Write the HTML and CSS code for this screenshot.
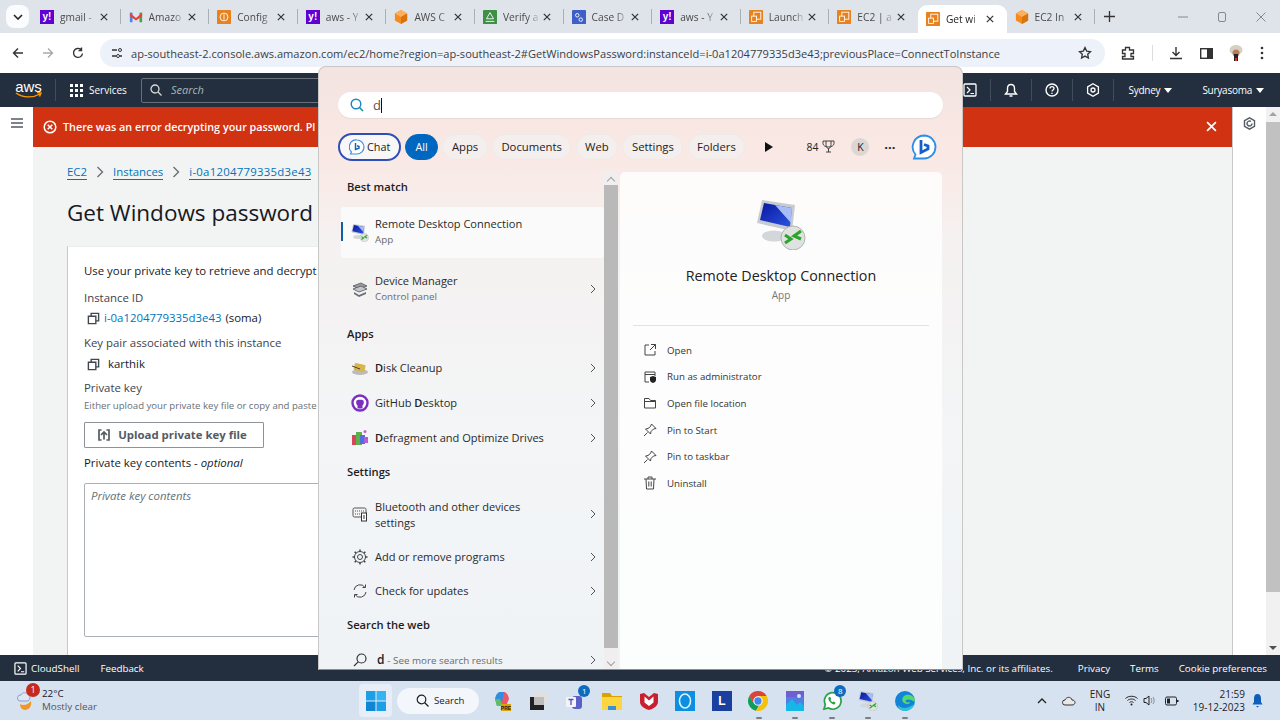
FILE: index.html
```html
<!DOCTYPE html>
<html lang="en">
<head>
<meta charset="utf-8">
<title>Get Windows password</title>
<link rel="stylesheet" href="styles.css">
</head>
<body>
<svg class="defs" width="0" height="0">
  <defs>
    <linearGradient id="scr" x1="0" y1="0" x2="1" y2="1"><stop offset="0" stop-color="#0a18a0"/><stop offset="1" stop-color="#2a55e0"/></linearGradient>
  </defs>
  <symbol id="cube" viewBox="0 0 16 16"><path fill="#f58a1f" d="M8 0l7 4v8l-7 4-7-4V4z"/><path fill="#fbb05c" d="M8 0l7 4-7 4-7-4z"/><path fill="#d9730d" d="M8 8l7-4v8l-7 4z"/></symbol>
  <symbol id="ec2" viewBox="0 0 16 16"><rect width="16" height="16" rx="1" fill="#e8821e"/><rect x="5.5" y="2.5" width="8" height="8" fill="none" stroke="#fff" stroke-width="1"/><rect x="3" y="7" width="5.5" height="6" fill="#e8821e" stroke="#fff" stroke-width="1"/></symbol>
  <symbol id="x" viewBox="0 0 10 10"><path d="M1 1l8 8M9 1l-8 8" stroke="currentColor" stroke-width="1.5" fill="none"/></symbol>
  <symbol id="chev" viewBox="0 0 8 10"><path d="M2 1l4 4-4 4" stroke="#555" stroke-width="1" fill="none"/></symbol>
  <symbol id="copy" viewBox="0 0 14 14"><path d="M1.500 4.500h8v8h-8zM4.500 4.500v-3h8v8h-3" fill="none" stroke="#414750" stroke-width="1.500"/></symbol>
  <symbol id="rdp" viewBox="0 0 50 50">
    <ellipse cx="18" cy="36" rx="12" ry="5.500" fill="#d3d6da"/>
    <path fill="#c8ccd2" d="M6 0l33 5-3 26L1 23z"/>
    <path fill="url(#scr)" d="M8 3l28 5-2 19L4 20z"/>
    <path fill="#a9bcf5" d="M19 5l17 3-1 15z"/>
    <circle cx="37" cy="38" r="12" fill="#dfe2df" stroke="#b0b4b0"/>
    <path d="M29 35l6 4-6 4M45 31l-7 5 7 3" fill="none" stroke="#2da52d" stroke-width="3"/>
  </symbol>
  <symbol id="pin" viewBox="0 0 14 14"><path d="M8.500 1l4.500 4.500-2.500.5-2.500 2.500-.5 2.500-5-5 2.500-.5L7.500 3.500zM4.500 9.500L1 13" fill="none" stroke="#444" stroke-width="1"/></symbol>
  <symbol id="web-search" viewBox="0 0 14 14"><circle cx="8.500" cy="5.500" r="4.500" fill="none" stroke="#333" stroke-width="1.200"/><path d="M5.200 8.800L1 13" stroke="#333" stroke-width="1.200"/></symbol>
</svg>

<header class="tabstrip">
  <button class="tab-menu"><svg width="10" height="6" viewBox="0 0 10 6"><path d="M1 1l4 4 4-4" stroke="#222" stroke-width="1.600" fill="none"/></svg></button>
  <div class="tabs">
    <div class="tab"><span class="yahoo">y!</span><span class="tab-title">gmail -</span><svg class="tab-x"><use href="#x"/></svg></div>
    <div class="tab"><svg class="fav" viewBox="0 0 16 16"><path fill="#4285f4" d="M1 3h3v11H1z"/><path fill="#34a853" d="M12 3h3v11h-3z"/><path fill="#ea4335" d="M1 3l7 6 7-6v4l-7 5-7-5z"/></svg><span class="tab-title">Amazo</span><svg class="tab-x"><use href="#x"/></svg></div>
    <div class="tab"><svg class="fav" viewBox="0 0 16 16"><rect width="16" height="16" rx="1" fill="#e8821e"/><circle cx="8" cy="8" r="4.500" fill="none" stroke="#fff"/><path d="M8 5v6" stroke="#fff"/></svg><span class="tab-title">Config</span><svg class="tab-x"><use href="#x"/></svg></div>
    <div class="tab"><span class="yahoo">y!</span><span class="tab-title">aws - Y</span><svg class="tab-x"><use href="#x"/></svg></div>
    <div class="tab"><svg class="fav"><use href="#cube"/></svg><span class="tab-title">AWS C</span><svg class="tab-x"><use href="#x"/></svg></div>
    <div class="tab"><svg class="fav" viewBox="0 0 16 16"><rect width="16" height="16" rx="1" fill="#3f8f45"/><path d="M8 3l4 7H4zM3 13h10" fill="none" stroke="#fff"/></svg><span class="tab-title">Verify a</span><svg class="tab-x"><use href="#x"/></svg></div>
    <div class="tab"><svg class="fav" viewBox="0 0 16 16"><rect width="16" height="16" rx="1" fill="#3f5fc8"/><circle cx="6" cy="6" r="2" fill="none" stroke="#fff"/><circle cx="10" cy="11" r="2" fill="none" stroke="#fff"/></svg><span class="tab-title">Case D</span><svg class="tab-x"><use href="#x"/></svg></div>
    <div class="tab"><span class="yahoo">y!</span><span class="tab-title">aws - Y</span><svg class="tab-x"><use href="#x"/></svg></div>
    <div class="tab"><svg class="fav"><use href="#ec2"/></svg><span class="tab-title">Launch</span><svg class="tab-x"><use href="#x"/></svg></div>
    <div class="tab"><svg class="fav"><use href="#ec2"/></svg><span class="tab-title">EC2 | a</span><svg class="tab-x"><use href="#x"/></svg></div>
    <div class="tab active"><svg class="fav"><use href="#ec2"/></svg><span class="tab-title">Get wi</span><svg class="tab-x"><use href="#x"/></svg></div>
    <div class="tab no-sep"><svg class="fav"><use href="#cube"/></svg><span class="tab-title">EC2 In</span><svg class="tab-x"><use href="#x"/></svg></div>
  </div>
  <button class="new-tab"><svg width="11" height="11" viewBox="0 0 11 11"><path d="M5.500 0v11M0 5.500h11" stroke="#333" stroke-width="1.300"/></svg></button>
  <div class="win-controls">
    <svg width="10" height="10" viewBox="0 0 10 10"><path d="M0 5h10" stroke="#888"/></svg>
    <svg width="10" height="10" viewBox="0 0 10 10"><rect x="1.500" y=".5" width="7" height="9" rx="1.500" fill="none" stroke="#888"/></svg>
    <svg width="10" height="10" viewBox="0 0 10 10"><path d="M.5.5l9 9M9.500.5l-9 9" stroke="#888"/></svg>
  </div>
</header>

<nav class="toolbar">
  <div class="nav-btns">
    <svg width="12" height="12" viewBox="0 0 12 12"><path d="M11 6H1.500M6 1.500L1.500 6 6 10.500" stroke="#333" stroke-width="1.400" fill="none"/></svg>
    <svg width="12" height="12" viewBox="0 0 12 12"><path d="M1 6h9.500M6 1.500L10.500 6 6 10.500" stroke="#aaa" stroke-width="1.400" fill="none"/></svg>
    <svg width="12" height="12" viewBox="0 0 12 12"><path d="M10.500 6.500A4.500 4.500 0 1 1 9 2.500M9.500.5v3h-3" stroke="#333" stroke-width="1.400" fill="none"/></svg>
  </div>
  <div class="omnibox">
    <span class="site-info"><svg width="12" height="12" viewBox="0 0 12 12"><path d="M1 3h5M9 9h2M1 9h4" stroke="#333" stroke-width="1.300"/><circle cx="9" cy="3" r="1.500" fill="none" stroke="#333"/><circle cx="7" cy="9" r="1.500" fill="none" stroke="#333"/></svg></span>
    <span class="url">ap-southeast-2.console.aws.amazon.com/ec2/home?region=ap-southeast-2#GetWindowsPassword:instanceId=i-0a1204779335d3e43;previousPlace=ConnectToInstance</span>
    <svg class="star" width="14" height="14" viewBox="0 0 14 14"><path d="M7 1.500l1.700 3.600 3.800.5-2.800 2.600.7 3.800L7 10.100 3.600 12l.7-3.800L1.500 5.600l3.800-.5z" fill="none" stroke="#333" stroke-width="1.300"/></svg>
  </div>
  <div class="tool-icons">
    <svg width="14" height="14" viewBox="0 0 14 14"><path d="M1.500 4h3V1.500h4V4h4v3.500H10v3h2.500v2.500h-11v-2.500H4v-3H1.500z" fill="none" stroke="#333" stroke-width="1.300"/></svg>
    <span class="tool-sep"></span>
    <svg width="14" height="14" viewBox="0 0 14 14"><path d="M7 1v8M3.500 6L7 9.500 10.500 6M1 12.500h12" fill="none" stroke="#333" stroke-width="1.400"/></svg>
    <svg width="13" height="13" viewBox="0 0 13 13"><rect x=".7" y="1.700" width="11.600" height="9.600" fill="none" stroke="#333" stroke-width="1.400"/><rect x="7" y="1.700" width="5.300" height="9.600" fill="#333"/></svg>
    <svg width="14" height="18" viewBox="0 0 14 18"><ellipse cx="7" cy="6" rx="6.500" ry="5" fill="#d8cfc4"/><circle cx="7" cy="9" r="3.500" fill="#b77f5c"/><rect x="5" y="10" width="4" height="7" fill="#222"/><rect x="6" y="14" width="2" height="3" fill="#c33"/></svg>
    <svg width="4" height="14" viewBox="0 0 4 14"><circle cx="2" cy="2" r="1.300" fill="#333"/><circle cx="2" cy="7" r="1.300" fill="#333"/><circle cx="2" cy="12" r="1.300" fill="#333"/></svg>
  </div>
</nav>

<div class="awsbar">
  <div class="aws-logo"><span>aws</span><svg width="27" height="7" viewBox="0 0 27 7"><path d="M1 1c7 5 17 5 24 1M22 .5l4 .5-1.500 3.500" fill="none" stroke="#f90" stroke-width="1.400"/></svg></div>
  <span class="aws-sep first"></span>
  <svg class="grid" width="13" height="13" viewBox="0 0 13 13"><path fill="#fff" d="M0 0h3v3H0zM5 0h3v3H5zM10 0h3v3h-3zM0 5h3v3H0zM5 5h3v3H5zM10 5h3v3h-3zM0 10h3v3H0zM5 10h3v3H5zM10 10h3v3h-3z"/></svg>
  <span class="services">Services</span>
  <div class="aws-search"><svg width="12" height="12" viewBox="0 0 12 12"><circle cx="5" cy="5" r="4" fill="none" stroke="#d5dbdb" stroke-width="1.300"/><path d="M8 8l3.500 3.500" stroke="#d5dbdb" stroke-width="1.300"/></svg><em>Search</em></div>
  <div class="aws-right">
    <span class="aws-ico"><svg width="14" height="14" viewBox="0 0 14 14"><rect x="1" y="1" width="12" height="12" rx="1" fill="none" stroke="#fff" stroke-width="1.300"/><path d="M4 4l3 3-3 3M7.500 10.500H11" fill="none" stroke="#fff" stroke-width="1.200"/></svg></span>
    <span class="aws-ico"><svg width="14" height="14" viewBox="0 0 14 14"><path d="M7 1.500c-2.500 0-3.500 2-3.500 4v3L1.500 11h11l-2-2.500v-3c0-2-1-4-3.500-4zM5.500 13h3" fill="none" stroke="#fff" stroke-width="1.400"/></svg></span>
    <span class="aws-ico"><svg width="14" height="14" viewBox="0 0 14 14"><circle cx="7" cy="7" r="6" fill="none" stroke="#fff" stroke-width="1.400"/><path d="M5 5.500C5 3 9 3 9 5.500 9 7 7 7 7 8.500M7 9.700v1.300" fill="none" stroke="#fff" stroke-width="1.300"/></svg></span>
    <span class="aws-ico"><svg width="14" height="14" viewBox="0 0 14 14"><path d="M7 .8l5.400 3.100v6.200L7 13.200 1.600 10.100V3.900z" fill="none" stroke="#fff" stroke-width="1.300"/><circle cx="7" cy="7" r="2" fill="none" stroke="#fff" stroke-width="1.300"/></svg></span>
    <span class="aws-menu sydney">Sydney<i></i></span>
    <span class="aws-menu">Suryasoma<i></i></span>
  </div>
</div>

<div class="page">
  <aside class="sidenav"><svg class="side-ico" width="12" height="10" viewBox="0 0 12 10"><path d="M0 1h12M0 5h12M0 9h12" stroke="#545b64" stroke-width="1.300"/></svg></aside>
  <main class="main">
    <div class="flash">
      <svg width="14" height="14" viewBox="0 0 14 14"><circle cx="7" cy="7" r="5.800" fill="none" stroke="#fff" stroke-width="1.500"/><path d="M4.700 4.700l4.600 4.600M9.300 4.700l-4.600 4.600" stroke="#fff" stroke-width="1.500"/></svg>
      <span class="flash-text">There was an error decrypting your password. Pl</span>
      <svg class="flash-x"><use href="#x"/></svg>
    </div>
    <div class="content">
      <div class="crumbs"><a>EC2</a><svg class="crumb-chev" viewBox="0 0 8 12"><path d="M1.500 1l5 5-5 5" stroke="#687078" stroke-width="1.400" fill="none"/></svg><a>Instances</a><svg class="crumb-chev" viewBox="0 0 8 12"><path d="M1.500 1l5 5-5 5" stroke="#687078" stroke-width="1.400" fill="none"/></svg><a class="crumb-id">i-0a1204779335d3e43</a></div>
      <h1>Get Windows password</h1>
      <section class="card">
        <p class="intro">Use your private key to retrieve and decrypt</p>
        <p class="label l-inst">Instance ID</p>
        <p class="value v-inst"><svg class="copy"><use href="#copy"/></svg><a>i-0a1204779335d3e43</a> (soma)</p>
        <p class="label l-key">Key pair associated with this instance</p>
        <p class="value v-key"><svg class="copy"><use href="#copy"/></svg><span>karthik</span></p>
        <p class="label l-pk">Private key</p>
        <p class="hint">Either upload your private key file or copy and paste</p>
        <button class="upload"><svg width="12" height="12" viewBox="0 0 12 12"><path d="M3.500 1H1v10h2.500M8.500 1H11v10H8.500M6 10.500V3M3 6l3-3 3 3" fill="none" stroke="#545b64" stroke-width="1.700"/></svg>Upload private key file</button>
        <p class="label l-contents">Private key contents - <em>optional</em></p>
        <textarea class="keybox" placeholder="Private key contents"></textarea>
      </section>
    </div>
  </main>
  <aside class="sidepanel"><svg class="side-ico" width="13" height="13" viewBox="0 0 13 13"><path d="M6.500.8l5 2.900v5.600l-5 2.900-5-2.900V3.700z" fill="none" stroke="#545b64" stroke-width="1.400"/><path d="M9 6.500a2.500 2.500 0 1 1-1-2" fill="none" stroke="#545b64" stroke-width="1.400"/></svg></aside>
  <div class="page-scroll"><i class="arrow-up"></i><b></b><i class="arrow-down"></i></div>
</div>

<footer class="awsfoot">
  <span class="cloudshell"><svg width="13" height="13" viewBox="0 0 14 14"><rect x="1" y="1" width="12" height="12" rx="1" fill="none" stroke="#fff" stroke-width="1.300"/><path d="M4 4l3 3-3 3M7.500 10.500H11" fill="none" stroke="#fff" stroke-width="1.200"/></svg>CloudShell</span>
  <span class="feedback">Feedback</span>
  <span class="copyright">© 2023, Amazon Web Services, Inc. or its affiliates.</span>
  <span class="foot-link privacy">Privacy</span>
  <span class="foot-link">Terms</span>
  <span class="foot-link">Cookie preferences</span>
</footer>

<div class="taskbar">
  <div class="weather">
    <span class="weather-ico"><svg width="22" height="24" viewBox="0 0 22 24"><path d="M3 13a3 3 0 0 1 1-6c1-3 6-3 7 0 2 0 3 4 0 6z" fill="#dfe7f2" stroke="#7fa3d0"/><path d="M3 16c3 2 8 1 11-3 1 5-2 9-6 9-3 0-5-3-5-6z" fill="#f2962a"/></svg><span class="wbadge">1</span></span>
    <span class="wtext"><span class="temp">22°C</span><span class="cond">Mostly clear</span></span>
  </div>
  <div class="task-center">
    <span class="start"><svg width="20" height="20" viewBox="0 0 20 20"><path fill="#1d9fe8" d="M0 0h9.500v9.500H0z"/><path fill="#36b3f2" d="M10.500 0H20v9.500h-9.500z"/><path fill="#0f86d4" d="M0 10.500h9.500V20H0z"/><path fill="#1d9fe8" d="M10.500 10.500H20V20h-9.500z"/></svg></span>
    <span class="task-search"><svg width="13" height="13" viewBox="0 0 13 13"><circle cx="5.500" cy="5.500" r="4.300" fill="none" stroke="#222" stroke-width="1.200"/><path d="M8.500 8.500l4 4" stroke="#222" stroke-width="1.200"/></svg>Search</span>
    <span class="tico"><svg width="20" height="20" viewBox="0 0 20 20"><path d="M3 8c1-5 3-7 5-7h4l3 6-4 8H5z" fill="#2e8fe0"/><path d="M12 1c2 0 4 2 5 7l-3 7h-5z" fill="#e8596d"/><path d="M3 8l5 0 3 7H5z" fill="#5fbf5f"/><rect x="9" y="13" width="10" height="7" fill="#d9a400"/><text x="14" y="19" font-size="5" font-weight="700" text-anchor="middle" fill="#222" font-family="Liberation Sans">PRE</text></svg></span>
    <span class="tico"><svg width="20" height="20" viewBox="0 0 20 20"><rect x="5" y="1" width="14" height="13" fill="#e0e0e0"/><rect x="1" y="6" width="14" height="13" fill="#222"/><rect x="5" y="6" width="10" height="8" fill="#bdbdbd"/></svg></span>
    <span class="tico"><svg width="20" height="20" viewBox="0 0 20 20"><rect x="7" y="5" width="10" height="13" rx="3" fill="#5b5fc7"/><rect x="1" y="6" width="10" height="10" rx="1" fill="#f4f4f8"/><path d="M3.500 8.500h5M6 8.500V14" stroke="#4b53bc" stroke-width="1.300"/></svg><span class="tbadge">1</span></span>
    <span class="tico"><svg width="20" height="20" viewBox="0 0 20 20"><path d="M0 2h8l2 3h10v3H0z" fill="#d9a400"/><path d="M0 6h20v13H0z" fill="#fcd53f"/><rect x="6" y="15" width="8" height="4" fill="#3b8fd6"/></svg></span>
    <span class="tico"><svg width="20" height="20" viewBox="0 0 20 20"><path d="M1 3l4-1 5 4 5-4 4 1v8c0 4-5 7-9 8-4-1-9-4-9-8z" fill="#c8202f"/><path d="M5.500 5.500l4.500 4 4.500-4v6L10 15l-4.500-3.500z" fill="#fff"/></svg></span>
    <span class="tico"><svg width="20" height="20" viewBox="0 0 20 20"><rect width="20" height="20" fill="#0c8fe0"/><ellipse cx="10" cy="10" rx="5.500" ry="7" fill="none" stroke="#d9f1ff" stroke-width="1.600"/></svg></span>
    <span class="tico"><span class="l-app">L</span></span>
    <span class="tico"><svg width="20" height="20" viewBox="0 0 20 20"><path d="M1.340 5A10 10 0 0 0 8 19.800l4.330-7.500-6.660 0z" fill="#0f9d58"/><path d="M18.660 5A10 10 0 0 1 8 19.800l4.330-7.500L10 5z" fill="#f4c20d"/><path d="M1.340 5A10 10 0 0 1 18.660 5H10l-4.330 7.500z" fill="#db4437"/><circle cx="10" cy="10" r="4.200" fill="#4285f4" stroke="#fff" stroke-width="1.100"/></svg><i class="dot"></i></span>
    <span class="tico"><svg width="18" height="20" viewBox="0 0 18 20"><rect width="18" height="20" rx="1" fill="#4f7fe0"/><path d="M0 20v-6l6-6 5 6 3-3 4 4v5z" fill="#16b6e8"/><path d="M0 0h18v6H0z" fill="#6d5fd0"/><circle cx="13" cy="5" r="2" fill="#cfe8ff"/></svg><i class="dot"></i></span>
    <span class="tico"><svg width="20" height="20" viewBox="0 0 20 20"><path d="M2 18l1.300-4.500A8.300 8.300 0 1 1 6.500 17z" fill="#fff" stroke="#25a244" stroke-width="1.700"/><path d="M7 6c-1 1-1 3 1 5s4 3 5 2l.5-1.500-2-1-1 .7C9.500 10.500 9 10 8.500 9l.7-1-1-2z" fill="#25a244"/></svg><span class="tbadge">8</span><i class="dot"></i></span>
    <span class="tico"><svg width="20" height="20"><use href="#rdp"/></svg><i class="dot"></i></span>
    <span class="tico"><svg width="20" height="20" viewBox="0 0 20 20"><circle cx="10" cy="10" r="10" fill="#1283d6"/><path d="M20 11C20 5 15 3 11 4 7 5 6 10 9 12c3 2 6 1 6-1-3 1-5 0-4-2 1-1 5-1 9 2z" fill="#54d96e"/><path d="M19 13c-1 4-5 7-9 7-4 0-7-3-7-6 2 3 9 5 16-1z" fill="#2bc4d9"/></svg><i class="dot"></i></span>
  </div>
  <div class="tray">
    <svg class="tray-up" width="10" height="6" viewBox="0 0 10 6"><path d="M1 5l4-4 4 4" fill="none" stroke="#222" stroke-width="1.300"/></svg>
    <svg class="tray-cloud" width="14" height="10" viewBox="0 0 14 10"><path d="M3 9a2.500 2.500 0 0 1 0-5C4 1 9 0 10 4c4 0 4 5 0 5z" fill="#e8e8e8" stroke="#333"/></svg>
    <span class="lang">ENG<br>IN</span>
    <svg class="tray-wifi" width="13" height="11" viewBox="0 0 13 11"><path d="M.5 3.500c3-3 9-3 12 0M2.500 5.500c2-2 6-2 8 0M4.500 7.500c1-1 3-1 4 0" fill="none" stroke="#222"/><circle cx="6.500" cy="9.500" r="1" fill="#222"/></svg>
    <svg class="tray-vol" width="13" height="11" viewBox="0 0 13 11"><path d="M1 3.500h2L6 1v9L3 7.500H1z" fill="none" stroke="#222"/><path d="M8 3c1 1.500 1 3.500 0 5M10 2c1.500 2 1.500 5 0 7" fill="none" stroke="#888"/></svg>
    <svg class="tray-batt" width="14" height="10" viewBox="0 0 14 10"><rect x=".5" y="1" width="11" height="8" rx="1.500" fill="none" stroke="#222"/><rect x="2" y="2.500" width="3" height="5" fill="#222"/><rect x="12" y="4" width="1.500" height="2" fill="#222"/></svg>
    <span class="clock">21:59<br>19-12-2023</span>
    <svg class="tray-bell" width="11" height="14" viewBox="0 0 11 14"><path d="M5.500 0C3 0 2 2 2 4.500V8L.5 10.500h10L9 8V4.500C9 2 8 0 5.500 0zM4 12h3l-1.500 1.500z" fill="#0f5fb8"/></svg>
  </div>
</div>

<div class="search-popup">
  <div class="search-input">
    <svg width="14" height="14" viewBox="0 0 14 14"><circle cx="6" cy="6" r="4.800" fill="none" stroke="#1b85c6" stroke-width="1.400"/><path d="M9.500 9.500l3.500 3.500" stroke="#0d8f8f" stroke-width="1.400"/></svg>
    <span class="typed">d</span><span class="caret"></span>
  </div>
  <div class="filters">
    <span class="pill chat"><svg width="16" height="16" viewBox="0 0 16 16"><path d="M8 1a7 7 0 0 1 0 14H1.500l1-2A7 7 0 0 1 8 1z" fill="#fff" stroke="#3f8fe0" stroke-width="1.200"/><path d="M6.500 4v6.500l3.500-1.300V7.500L8 6.800" fill="none" stroke="#1565c0" stroke-width="1.500"/></svg>Chat</span>
    <span class="pill all">All</span>
    <span class="pill">Apps</span>
    <span class="pill">Documents</span>
    <span class="pill">Web</span>
    <span class="pill">Settings</span>
    <span class="pill">Folders</span>
    <span class="extras">
      <svg class="play" width="8" height="10" viewBox="0 0 8 10"><path d="M0 0l8 5-8 5z" fill="#111"/></svg>
      <span class="score">84</span>
      <svg class="trophy" width="13" height="13" viewBox="0 0 13 13"><path d="M1 1h11v2.500c0 2-2.500 3.500-5.500 3.500S1 5.500 1 3.500zM4 1v3.500c0 3 1.500 4 2.500 4s2.500-1 2.500-4V1M6.500 8.500V12M4 12h5" fill="none" stroke="#444"/></svg>
      <span class="avatar">K</span>
      <span class="dots">···</span>
      <svg class="bing" width="26" height="26" viewBox="0 0 26 26"><path d="M13 1.500a11.500 11.500 0 0 1 0 23H3l1.500-4A11.500 11.500 0 0 1 13 1.500z" fill="#fff" stroke="#2b8fe8" stroke-width="1.800"/><path d="M10 6v12.500l7-3.500v-3l-4-1.500" fill="none" stroke="#1560c8" stroke-width="2.800"/></svg>
    </span>
  </div>
  <div class="results">
    <div class="result-list">
      <h2 class="sec">Best match</h2>
      <div class="row two selected">
        <span class="accent"></span>
        <svg class="ri"><use href="#rdp"/></svg>
        <span class="rt"><span class="t1">Remote Desktop Connection</span><span class="t2">App</span></span>
      </div>
      <div class="row two dm">
        <svg class="ri" viewBox="0 0 18 18"><path d="M2 6l8-3 6 3-8 3z" fill="#9aa0a6" stroke="#444" stroke-width=".7"/><path d="M2 9l8-3 6 3-8 3z" fill="#c4c8cc" stroke="#444" stroke-width=".7"/><path d="M3 12l5 3 7-3v2l-7 3-5-3z" fill="#6b7076"/></svg>
        <span class="rt"><span class="t1">Device Manager</span><span class="t2">Control panel</span></span>
        <svg class="rc"><use href="#chev"/></svg>
      </div>
      <h2 class="sec">Apps</h2>
      <div class="row one first-app">
        <svg class="ri" viewBox="0 0 18 18"><ellipse cx="9" cy="13" rx="8" ry="3" fill="#bbb"/><rect x="3" y="5" width="11" height="7" rx="1" fill="#d8b54a" transform="rotate(12 9 9)"/><path d="M1 7l8 3" stroke="#444"/></svg>
        <span class="t1"><b>D</b>isk Cleanup</span><svg class="rc"><use href="#chev"/></svg>
      </div>
      <div class="row one">
        <svg class="ri" viewBox="0 0 18 18"><circle cx="9" cy="9" r="7.500" fill="#fff" stroke="#7c2fbf" stroke-width="2.400"/><path d="M5.500 6.500c1-1 6-1 7 0 .7 2 .3 4-1 5v3h-5v-3c-1.300-1-1.700-3-1-5z" fill="#7c2fbf"/></svg>
        <span class="t1">GitHub <b>D</b>esktop</span><svg class="rc"><use href="#chev"/></svg>
      </div>
      <div class="row one">
        <svg class="ri" viewBox="0 0 18 18"><rect x="1" y="6" width="5" height="10" fill="#d6455a"/><rect x="5" y="3" width="6" height="13" fill="#5db04a"/><rect x="9" y="6" width="5" height="9" fill="#4f6fdc"/><rect x="13" y="8" width="4" height="6" fill="#b65cd6"/><circle cx="14" cy="2.500" r="1.500" fill="#d65cc9"/></svg>
        <span class="t1"><b>D</b>efragment and Optimize Drives</span><svg class="rc"><use href="#chev"/></svg>
      </div>
      <h2 class="sec sec-settings">Settings</h2>
      <div class="row two wrap">
        <svg class="ri" viewBox="0 0 18 18"><rect x="2" y="3" width="13" height="9" rx="1.500" fill="none" stroke="#555"/><path d="M4 6h9M4 9h6" stroke="#555" stroke-dasharray="1 1"/><rect x="10.500" y="8" width="5" height="8" fill="#fff" stroke="#333"/><path d="M13 10v4" stroke="#333"/></svg>
        <span class="t1 wrap-text">Bluetooth and other devices settings</span><svg class="rc"><use href="#chev"/></svg>
      </div>
      <div class="row one">
        <svg class="ri" viewBox="0 0 18 18"><circle cx="9" cy="9" r="2.500" fill="none" stroke="#444"/><circle cx="9" cy="9" r="5.500" fill="none" stroke="#444"/><path d="M9 1.500v2M9 14.500v2M1.500 9h2M14.500 9h2M3.700 3.700l1.400 1.400M12.900 12.900l1.400 1.400M3.700 14.300l1.400-1.400M12.900 5.100l1.400-1.400" stroke="#444" stroke-width="1.500"/></svg>
        <span class="t1">Add or remove programs</span><svg class="rc"><use href="#chev"/></svg>
      </div>
      <div class="row one check">
        <svg class="ri" viewBox="0 0 18 18"><path d="M3 8a6 6 0 0 1 11-2.500M15 10a6 6 0 0 1-11 2.500" fill="none" stroke="#444"/><path d="M14.500 2.500v3h-3M3.500 15.500v-3h3" fill="none" stroke="#444"/></svg>
        <span class="t1">Check for updates</span><svg class="rc"><use href="#chev"/></svg>
      </div>
      <h2 class="sec">Search the web</h2>
      <div class="row one web">
        <svg class="ri"><use href="#web-search"/></svg>
        <span class="t1"><span class="web-d">d</span> <span class="t2 inline">- See more search results</span></span><svg class="rc"><use href="#chev"/></svg>
      </div>
    </div>
    <div class="list-scroll"><i class="sc-up"></i><b></b><i class="sc-down"></i></div>
    <div class="detail">
      <svg class="big-icon"><use href="#rdp"/></svg>
      <div class="d-title">Remote Desktop Connection</div>
      <div class="d-sub">App</div>
      <div class="d-rule"></div>
      <div class="action"><svg viewBox="0 0 14 14"><path d="M6 2H2v10h10V8M8 1.500h4.500V6M12.500 1.500L7 7" fill="none" stroke="#444"/></svg>Open</div>
      <div class="action"><svg viewBox="0 0 14 14"><path d="M12 6V2H2v10h4" fill="none" stroke="#444"/><path d="M2 4.500h10" stroke="#444"/><path d="M7 7l3-1 3 1v3c0 1.500-1.500 2.500-3 3-1.500-.5-3-1.500-3-3z" fill="#222"/></svg>Run as administrator</div>
      <div class="action"><svg viewBox="0 0 14 14"><path d="M1.500 12V2.500H6l1.500 2h5V12z" fill="none" stroke="#444"/><path d="M1.500 5.500h11" stroke="#444"/></svg>Open file location</div>
      <div class="action"><svg><use href="#pin"/></svg>Pin to Start</div>
      <div class="action"><svg><use href="#pin"/></svg>Pin to taskbar</div>
      <div class="action"><svg viewBox="0 0 14 14"><path d="M1 3h12M3 3l.5 10h7L11 3M5 3V1h4v2M5.800 5.500v5M8.200 5.500v5" fill="none" stroke="#444"/></svg>Uninstall</div>
    </div>
  </div>
</div>
</body>
</html>
```

FILE: styles.css
```css
* { box-sizing: border-box; }
html, body { margin: 0; padding: 0; }
body {
  width: 1280px; height: 720px; overflow: hidden; position: relative;
  display: flex; flex-direction: column;
  font-family: "Open Sans", "Liberation Sans", sans-serif;
  color: #16191f; background: #fff;
}
p, h1, h2 { margin: 0; font-weight: 400; }
button { font-family: inherit; }
.defs { position: absolute; }

/* browser tabs */
.tabstrip { height: 33px; background: #dfe4eb; display: flex; align-items: center; flex: none; }
.tab-menu { width: 23px; height: 23px; margin: 0 0 0 6px; border: 0; border-radius: 8px; background: #fbfcfe; display: flex; align-items: center; justify-content: center; padding: 0; flex: none; }
.tabs { display: flex; margin-left: 3px; height: 33px; align-items: stretch; flex: none; }
.tab { width: 88.6px; padding: 0 8px; display: flex; align-items: center; gap: 6px; font-size: 10.2px; color: #4a4a4a; position: relative; }
.tab::after { content: ""; position: absolute; right: 0; top: 9px; height: 15px; width: 1px; background: #aab0b8; }
.tab.active { background: #fff; border-radius: 9px 9px 0 0; color: #222; margin-top: 5px; }
.tab.active::after { display: none; }
.tab:nth-child(10)::after { display: none; }
.tab-title { flex: 1; min-width: 0; margin-right: -4px; overflow: hidden; white-space: nowrap; -webkit-mask-image: linear-gradient(90deg, #000 65%, transparent 100%); mask-image: linear-gradient(90deg, #000 65%, transparent 100%); }
.fav { width: 14px; height: 14px; flex: none; }
.yahoo { width: 14px; height: 14px; flex: none; background: #5f01d1; color: #fff; font: 700 10px/14px "Liberation Sans", sans-serif; text-align: center; }
.tab-x { width: 8px; height: 8px; flex: none; color: #333; margin-right: 5px; }
.new-tab { border: 0; background: none; width: 14px; height: 14px; padding: 0; margin-left: 7px; display: flex; align-items: center; justify-content: center; flex: none; }
.win-controls { margin-left: auto; display: flex; gap: 29px; padding-right: 14px; align-items: center; }

/* browser toolbar */
.toolbar { height: 40px; background: #fff; display: flex; align-items: center; flex: none; }
.nav-btns { width: 100px; display: flex; justify-content: space-between; padding: 0 16px 0 12px; flex: none; }
.omnibox { width: 1005px; height: 28px; background: #edf2fa; border-radius: 14px; display: flex; align-items: center; flex: none; font-size: 11.08px; color: #3c4043; padding-left: 11px; }
.site-info { width: 20px; flex: none; display: flex; }
.url { white-space: nowrap; flex: none; width: 860px; overflow: visible; }
.star { margin-left: auto; margin-right: 13px; flex: none; }
.tool-icons { flex: 1; display: flex; align-items: center; padding-left: 16px; padding-right: 16px; justify-content: space-between; }
.tool-sep { width: 1px; height: 16px; background: #ddd; }

/* aws top bar */
.awsbar { height: 34px; background: #232f3e; color: #fff; display: flex; align-items: center; flex: none; font-size: 10px; }
.aws-logo { width: 27px; margin-left: 15px; display: flex; flex-direction: column; align-items: center; flex: none; font: 400 15px/12px "Liberation Sans", sans-serif; }
.aws-logo svg { margin-top: -1px; }
.aws-sep { width: 1px; height: 22px; background: #414d5c; flex: none; }
.aws-sep.first { margin-left: 13px; }
.grid { margin-left: 14px; flex: none; }
.services { margin-left: 6px; flex: none; }
.aws-search { margin-left: 14px; width: 300px; height: 25px; border: 1px solid #687078; border-radius: 2px; display: flex; align-items: center; gap: 9px; padding: 0 0 1px 8px; color: #aab7b8; flex: none; font-size: 11px; }
.aws-right { margin-left: auto; display: flex; align-items: center; height: 100%; }
.aws-ico { width: 41px; height: 22px; display: flex; align-items: center; justify-content: center; border-right: 1px solid #414d5c; flex: none; }
.aws-menu { display: inline-flex; align-items: center; gap: 4px; padding: 0 16px 0 0; white-space: nowrap; letter-spacing: -.25px; }
.aws-menu.sydney { padding-left: 15px; padding-right: 30px; }
.aws-menu i { width: 0; height: 0; border: 4px solid transparent; border-top: 5px solid #fff; border-bottom: 0; }

/* page body */
.page { flex: 1; min-height: 0; display: flex; overflow: hidden; }
.side-ico { display: block; }
.sidenav { width: 33px; flex: none; background: #fff; padding: 11px 0 0 11px; }
.main { flex: 1; min-width: 0; background: #f2f3f3; border-right: 1px solid #c6c9cc; overflow: hidden; display: flex; flex-direction: column; }
.flash { height: 40px; flex: none; background: #d13212; color: #fff; display: flex; align-items: center; padding: 0 0 1px 10px; font-size: 10.8px; font-weight: 600; gap: 6px; }
.flash-text { white-space: nowrap; padding-bottom: 1px; }
.flash-x { width: 11px; height: 11px; margin-left: auto; margin-right: 15px; color: #fff; }
.content { padding-left: 34px; flex: 1; min-height: 0; }
.crumbs { display: flex; align-items: center; margin-top: 17px; height: 16px; font-size: 11.4px; color: #0073bb; }
.crumbs a { border-bottom: 1px solid #0073bb; line-height: 14px; }
.crumb-id { letter-spacing: .25px; }
.crumb-chev { width: 8px; height: 12px; margin: 0 9px; }
h1 { font-size: 22.5px; line-height: 30px; margin-top: 18px; color: #16191f; white-space: nowrap; }
.card { width: 700px; height: 500px; background: #fff; margin-top: 18px; padding: 15px 16px 0; border-left: 1px solid #c6c9cc; border-top: 1px solid #eaeded; font-size: 11.4px; line-height: 18px; }
.card p { white-space: nowrap; }
.label { color: #3d434b; }
.l-inst { margin-top: 9px; }
.value { display: flex; align-items: center; gap: 4px; }
.v-inst { margin-top: 2px; padding-left: 3px; gap: 4px; white-space: pre; }
.v-inst a { color: #0073bb; }
.l-key { margin-top: 7px; }
.v-key { margin-top: 3px; padding-left: 3px; gap: 8px; }
.copy { width: 13px; height: 13px; flex: none; }
.l-pk { margin-top: 6px; }
.card .hint { font-size: 9.6px; line-height: 14px; color: #687078; margin-top: 2px; }
.upload { display: flex; align-items: center; justify-content: center; gap: 8px; width: 180px; height: 26px; margin-top: 9px; border: 1px solid #8d9399; background: #fff; color: #545b64; font-size: 11.4px; font-weight: 700; border-radius: 1px; padding: 0 3px 1px 0; }
.l-contents { margin-top: 6px; color: #16191f; }
.keybox { display: block; width: 560px; height: 154px; margin-top: 11px; border: 1px solid #aab0b6; border-radius: 2px; resize: none; padding: 3px 6px; font: italic 11.4px/18px "Open Sans", sans-serif; background: #fff; }
.keybox::placeholder { color: #687078; opacity: 1; }
.sidepanel { width: 33px; flex: none; background: #fff; padding: 10px 0 0 10px; }
.page-scroll { width: 14px; flex: none; background: #f1f1f1; display: flex; flex-direction: column; align-items: center; }
.page-scroll b { flex: 1; width: 100%; background: #c1c1c1; margin: 6px 0 54px; }
.arrow-up { width: 0; height: 0; border: 4px solid transparent; border-bottom: 4px solid #a3a3a3; border-top: 0; margin-top: 5px; }
.arrow-down { width: 0; height: 0; border: 4px solid transparent; border-top: 4px solid #505050; border-bottom: 0; margin-bottom: 5px; }

/* aws footer */
.awsfoot { height: 26px; background: #232f3e; color: #fff; display: flex; align-items: center; flex: none; font-size: 9.8px; padding-left: 14px; }
.cloudshell { display: flex; align-items: center; gap: 4px; }
.feedback { margin-left: 21px; }
.copyright { margin-left: auto; }
.foot-link { margin-left: 20px; }
.privacy { margin-left: 25px; }
.foot-link:last-child { margin-right: 13px; }

/* taskbar */
.taskbar { height: 39px; flex: none; background: #d7e2f1; display: flex; align-items: center; position: relative; }
.weather { display: flex; align-items: center; padding: 0 0 1px 17px; width: 359px; flex: none; }
.weather-ico { position: relative; width: 25px; height: 24px; flex: none; }
.wbadge { position: absolute; left: 9px; top: -5px; width: 14px; height: 14px; border-radius: 50%; background: #c42b1c; color: #fff; font-size: 9px; line-height: 14px; text-align: center; }
.wtext { display: flex; flex-direction: column; font-size: 9.8px; line-height: 13px; }
.cond { color: #555; }
.task-center { display: flex; align-items: center; flex: none; }
.start { width: 33px; height: 33px; background: #e8eef7; border-radius: 4px; display: flex; align-items: center; justify-content: center; flex: none; }
.task-search { display: flex; align-items: center; gap: 5px; width: 82px; height: 26px; margin-left: 5px; margin-right: 5px; background: #f3f6fb; border-radius: 13px; padding-left: 19px; font-size: 9.6px; color: #222; flex: none; }
.tico { width: 36.6px; height: 30px; display: flex; align-items: center; justify-content: center; position: relative; flex: none; }
.l-app { width: 20px; height: 20px; background: #1a3f9c; color: #fff; font: 700 12px/20px "Liberation Sans", sans-serif; text-align: center; }
.tbadge { position: absolute; left: 21px; top: -1px; width: 12px; height: 12px; border-radius: 50%; background: #0f6cbd; color: #fff; font-size: 8px; line-height: 12px; text-align: center; }
.dot { position: absolute; bottom: -3px; left: 15.5px; width: 6px; height: 2px; border-radius: 1px; background: #7a7f87; }
.tray { position: absolute; right: 0; top: 0; bottom: 0; width: 250px; display: flex; align-items: center; font-size: 10px; color: #222; }
.tray-up { margin-left: 7px; flex: none; }
.tray-cloud { margin-left: 15px; flex: none; }
.lang { width: 28px; margin-left: 10px; text-align: center; line-height: 13px; flex: none; }
.tray-wifi { margin-left: 11px; flex: none; }
.tray-vol { margin-left: 5px; flex: none; }
.tray-batt { margin-left: 9px; flex: none; }
.clock { flex: 1; text-align: right; line-height: 13px; }
.tray-bell { margin: 0 17px 0 7px; flex: none; }

/* windows search popup */
.search-popup {
  position: absolute; left: 318px; top: 66px; width: 645px; height: 604px;
  border-radius: 8px 8px 0 0; overflow: hidden;
  background: linear-gradient(180deg, #f3e4e1 0%, #fae8e4 14%, #f5f1f0 28%, #f3f5f6 60%, #f0f3f6 100%);
  border: 1px solid #c9c7c6; border-bottom-color: #8a8f96;
  padding: 25px 19px 0;
}
.search-input { height: 26px; width: 605px; background: #fff; border-radius: 13px; display: flex; align-items: center; padding-left: 12px; font-size: 13px; color: #555; box-shadow: 0 1px 1px rgba(0,0,0,.06); }
.typed { margin-left: 9px; line-height: 26px; }
.caret { width: 1px; height: 15px; background: #111; }
.filters { display: flex; align-items: center; gap: 4.2px; margin-top: 15px; height: 27px; }
.pill { height: 26px; padding: 0 8.5px; display: flex; align-items: center; border: 1px solid #ecebea; border-radius: 13px; background: #f4eeec; font-size: 11.3px; color: #222; flex: none; }
.chat { width: 63px; height: 28px; padding: 0 0 0 9px; gap: 2px; border: 2px solid #2f4fb8; border-radius: 14px; background: #f8f6f6; font-size: 10.8px; }
.all { width: 33px; justify-content: center; padding: 0; background: #0067c0; border-color: #0067c0; color: #fff; font-size: 10.8px; }
.extras { flex: 1; display: flex; align-items: center; height: 28px; font-size: 10.4px; color: #222; }
.play { margin-left: 16px; flex: none; }
.score { margin-left: 33px; }
.trophy { margin-left: 4px; }
.avatar { width: 18px; height: 18px; margin-left: 16px; border-radius: 50%; background: #dcd6d5; display: flex; align-items: center; justify-content: center; font-size: 10.5px; }
.dots { margin-left: 15px; font-weight: 700; font-size: 13px; }
.bing { margin-left: 16px; flex: none; }
.results { display: flex; margin-top: 12px; height: 530px; width: 604px; }
.result-list { width: 266px; flex: none; padding-left: 3px; margin-top: -2px; }
.sec { height: 34px; line-height: 34px; padding-left: 6px; font-size: 11.2px; font-weight: 600; color: #1d1d1d; }
.row { position: relative; display: flex; align-items: center; padding-left: 10px; font-size: 11.05px; color: #333; }
.row b { font-weight: 600; color: #1a1a1a; }
.two { height: 51px; }
.one { height: 35px; }
.selected { background: #fafafa; margin-top: 3px; border-radius: 3px; }
.selected .rt { margin-top: -1px; }
.dm { margin-top: 5px; margin-bottom: 3px; }
.first-app { margin-top: -1px; }
.check { margin-top: -1px; }
.accent { position: absolute; left: 0; top: 15px; width: 2px; height: 19px; background: #0f5fa8; }
.ri { width: 18px; height: 18px; flex: none; margin-right: 6px; }
.rt { display: flex; flex-direction: column; line-height: 16px; }
.t1 { white-space: nowrap; color: #2a2a2a; }
.t2 { font-size: 9.8px; color: #6a6a6a; }
.rc { position: absolute; right: 7px; top: 50%; margin-top: -5px; width: 8px; height: 10px; }
.wrap { height: 50px; }
.wrap-text { white-space: normal; width: 175px; line-height: 16px; padding-top: 2px; }
.web-d { font-size: 12px; font-weight: 600; color: #222; }
.inline { display: inline; }
.web .ri { width: 14px; height: 14px; margin: 0 10px 0 2px; }
.list-scroll { width: 14px; flex: none; display: flex; flex-direction: column; align-items: center; background: #f0eeee; height: 504px; }
.list-scroll b { flex: 1; width: 100%; background: #b9b9b9; margin: 1px 0 11px; }
.sc-up, .sc-down { width: 6px; height: 6px; border: solid #a0a0a0; border-width: 1px 0 0 1px; transform: rotate(45deg); margin-top: 6px; flex: none; }
.sc-down { transform: rotate(225deg); margin: 0 0 11px; }
.detail { flex: 1; margin-left: 2px; height: 504px; background: rgba(255,255,255,.8); border-radius: 5px 5px 0 0; display: flex; flex-direction: column; align-items: center; padding-top: 28px; }
.big-icon { width: 50px; height: 50px; flex: none; }
.d-title { font-size: 14.3px; line-height: 20px; margin-top: 16px; color: #222; }
.d-sub { font-size: 10px; color: #777; line-height: 14px; margin-top: 2px; }
.d-rule { width: 296px; height: 1px; background: #e2e2e2; margin: 23px 0 11px; flex: none; }
.action { align-self: stretch; margin-left: 23px; height: 26.6px; display: flex; align-items: center; gap: 10px; font-size: 9.7px; color: #333; flex: none; }
.action svg { width: 14px; height: 14px; flex: none; }
```
